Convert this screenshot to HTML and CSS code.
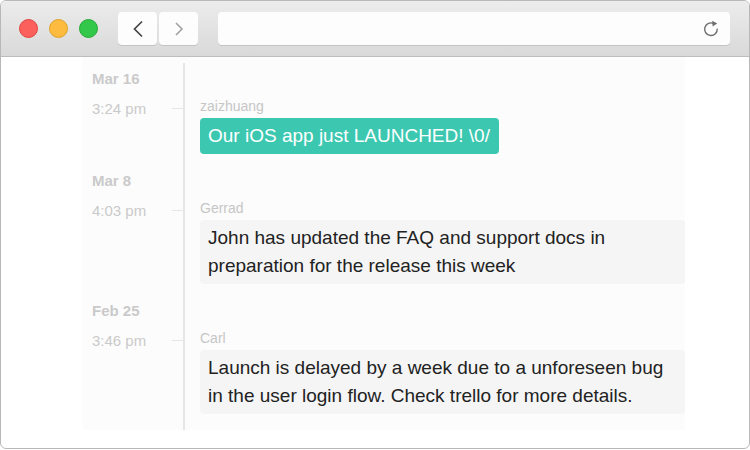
FILE: index.html
```html
<!DOCTYPE html>
<html lang="en">
<head>
    <meta charset="UTF-8">
    <title>Timeline</title>
    <link rel="stylesheet" href="styles.css">
</head>
<body>
    <div class="window">
        <!-- Title bar -->
        <div class="titlebar">
            <div class="lights">
                <span class="light red"></span>
                <span class="light yellow"></span>
                <span class="light green"></span>
            </div>
            <div class="nav">
                <button class="nav-btn">
                    <svg width="14" height="18" viewBox="0 0 14 18"><path d="M11 1.5 L3.5 9 L11 16.5" fill="none" stroke="#454545" stroke-width="1.7"/></svg>
                </button>
                <button class="nav-btn">
                    <svg width="14" height="18" viewBox="0 0 14 18"><path d="M4 3 L10 9 L4 15" fill="none" stroke="#a0a0a0" stroke-width="1.5"/></svg>
                </button>
            </div>
            <div class="address">
                <svg class="reload" width="18" height="18" viewBox="0 0 18 18">
                    <path d="M11.8 3.6 A6.3 6.3 0 1 0 15.2 8.6" fill="none" stroke="#6e6e6e" stroke-width="1.4"/>
                    <path d="M10.2 0.8 L15.2 3.4 L10.6 6.4 Z" fill="#6e6e6e"/>
                </svg>
            </div>
        </div>

        <!-- Timeline -->
        <div class="content">
            <div class="timeline">
                <div class="day">
                    <div class="date">Mar 16</div>
                    <div class="rail"></div>
                </div>
                <div class="post">
                    <div class="time"><span>3:24 pm</span><span class="tick"></span></div>
                    <div class="body">
                        <div class="author">zaizhuang</div>
                        <div class="bubble bubble-teal">Our iOS app just LAUNCHED! \0/</div>
                    </div>
                </div>

                <div class="day">
                    <div class="date">Mar 8</div>
                    <div class="rail"></div>
                </div>
                <div class="post">
                    <div class="time"><span>4:03 pm</span><span class="tick"></span></div>
                    <div class="body">
                        <div class="author">Gerrad</div>
                        <div class="bubble">John has updated the FAQ and support docs in preparation for the release this week</div>
                    </div>
                </div>

                <div class="day">
                    <div class="date">Feb 25</div>
                    <div class="rail"></div>
                </div>
                <div class="post last">
                    <div class="time"><span>3:46 pm</span><span class="tick"></span></div>
                    <div class="body">
                        <div class="author">Carl</div>
                        <div class="bubble">Launch is delayed by a week due to a unforeseen bug in the user login flow. Check trello for more details.</div>
                    </div>
                </div>
            </div>
        </div>
    </div>
</body>
</html>
```

FILE: styles.css
```css
:root {
    --teal: #3cc8b0;
    --bubble: #f5f5f5;
    --muted: #cacaca;
    --rail: #e6e6e6;
    --text: #222;
}

* {
    margin: 0;
    padding: 0;
    box-sizing: border-box;
}

body {
    font-family: "Liberation Sans", Arial, sans-serif;
    background: #fff;
}

.window {
    width: 750px;
    height: 449px;
    border: 1px solid #b8b8b8;
    border-radius: 6px;
    overflow: hidden;
    display: flex;
    flex-direction: column;
    background: #fff;
}

/* title bar */
.titlebar {
    height: 56px;
    flex-shrink: 0;
    display: flex;
    align-items: center;
    padding: 0 19px 0 18px;
    background: linear-gradient(#ececec, #d9d9d9);
    border-bottom: 1px solid #bdbdbd;
}

.lights {
    display: flex;
    gap: 11px;
}

.light {
    width: 19px;
    height: 19px;
    border-radius: 50%;
}

.red { background: #fc605c; border: 1px solid #e0443f; }
.yellow { background: #fdbc40; border: 1px solid #dfa124; }
.green { background: #34c84a; border: 1px solid #24a935; }

.nav {
    display: flex;
    gap: 2px;
    margin-left: 20px;
}

.nav-btn {
    width: 39px;
    height: 33px;
    border: none;
    border-radius: 4px;
    background: #fdfdfd;
    box-shadow: 0 1px 0 #c4c4c4;
    display: flex;
    align-items: center;
    justify-content: center;
}

.address {
    flex: 1;
    height: 33px;
    margin-left: 20px;
    border-radius: 4px;
    background: #fdfdfd;
    box-shadow: 0 1px 0 #c4c4c4;
    display: flex;
    align-items: center;
    justify-content: flex-end;
    padding-right: 10px;
}

/* content */
.content {
    flex: 1;
    padding-left: 81px;
    padding-right: 64px;
}

.timeline {
    background: #fcfcfc;
    padding-top: 6px;
    border-radius: 0 0 3px 3px;
}

.day,
.post {
    display: grid;
    grid-template-columns: 101px 1fr;
}

.day .rail,
.post .body {
    border-left: 2px solid var(--rail);
}

.date {
    height: 31px;
    line-height: 32px;
    padding-left: 10px;
    font-size: 15px;
    font-weight: bold;
    color: var(--muted);
}

.time {
    display: flex;
    align-items: center;
    justify-content: space-between;
    height: 26px;
    padding-top: 2px;
    padding-left: 10px;
    font-size: 15px;
    color: var(--muted);
}

.tick {
    width: 11px;
    height: 1px;
    background: var(--rail);
}

.body {
    padding-left: 15px;
    padding-bottom: 11px;
}

.post.last .body {
    padding-bottom: 16px;
}

.author {
    line-height: 24px;
    font-size: 14px;
    color: #c6c6c6;
}

.bubble {
    padding: 4px 9px 4px 8px;
    font-size: 19px;
    line-height: 28px;
    color: var(--text);
    background: var(--bubble);
    border-radius: 4px;
}

.bubble-teal {
    display: inline-block;
    color: #fff;
    background: var(--teal);
}
```
